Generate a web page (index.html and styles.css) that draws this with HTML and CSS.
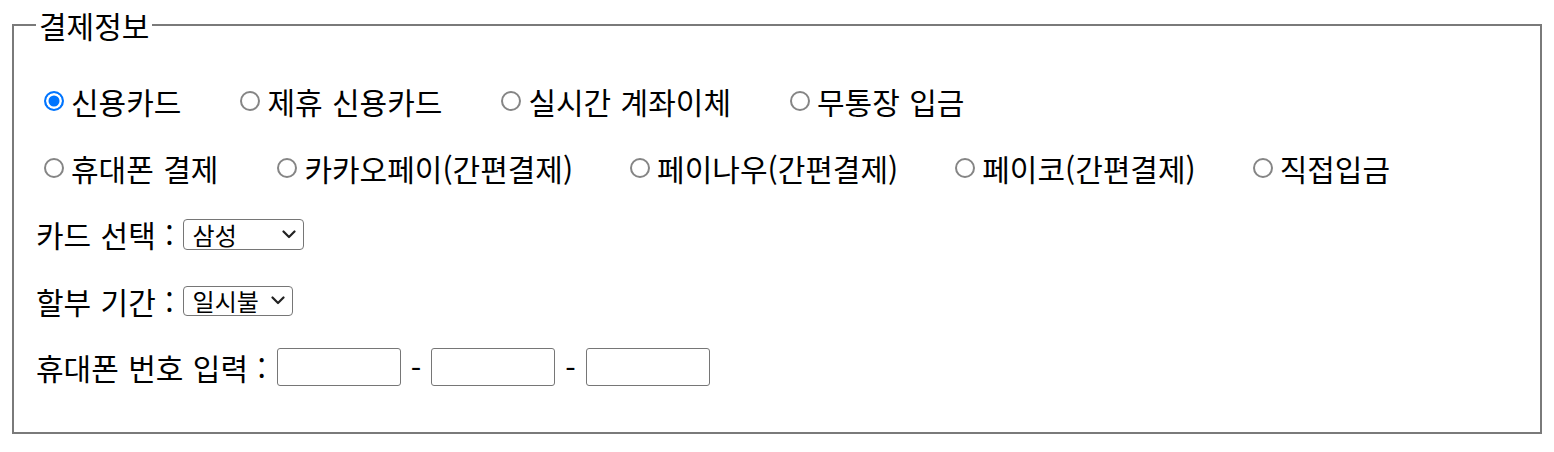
FILE: index.html
```html
<!DOCTYPE html>
<html lang="ko">
<head>
<meta charset="utf-8">
<title>결제정보</title>
<link rel="stylesheet" href="styles.css">
</head>
<body>
<form class="pay-form">
  <fieldset class="pay">
    <legend class="pay-title">결제정보</legend>
    <div class="rows">
      <div class="row">
        <label class="opt"><input type="radio" name="pay" checked><span>신용카드</span></label>
        <label class="opt"><input type="radio" name="pay"><span>제휴 신용카드</span></label>
        <label class="opt"><input type="radio" name="pay"><span>실시간 계좌이체</span></label>
        <label class="opt"><input type="radio" name="pay"><span>무통장 입금</span></label>
      </div>
      <div class="row">
        <label class="opt"><input type="radio" name="pay"><span>휴대폰 결제</span></label>
        <label class="opt opt-paren"><input type="radio" name="pay"><span>카카오페이(간편결제)</span></label>
        <label class="opt opt-paren"><input type="radio" name="pay"><span>페이나우(간편결제)</span></label>
        <label class="opt opt-paren"><input type="radio" name="pay"><span>페이코(간편결제)</span></label>
        <label class="opt"><input type="radio" name="pay"><span>직접입금</span></label>
      </div>
      <div class="row">
        <span class="field-label">카드 선택 :</span>
        <select class="sel sel-card">
          <option>삼성</option>
          <option>신한</option>
          <option>현대</option>
          <option>국민</option>
          <option>롯데</option>
          <option>하나</option>
        </select>
      </div>
      <div class="row">
        <span class="field-label">할부 기간 :</span>
        <select class="sel sel-term">
          <option>일시불</option>
          <option>2개월</option>
          <option>3개월</option>
          <option>6개월</option>
        </select>
      </div>
      <div class="row row-tel">
        <span class="field-label">휴대폰 번호 입력 :</span>
        <input class="tel" type="text">
        <span class="dash">-</span>
        <input class="tel" type="text">
        <span class="dash">-</span>
        <input class="tel" type="text">
      </div>
    </div>
  </fieldset>
</form>
</body>
</html>
```

FILE: styles.css
```css
html, body {
  background: #ffffff;
}

body {
  margin: 0;
  padding: 10px 12px;
  font-family: "Noto Sans CJK KR", "Noto Sans", sans-serif;
  font-size: 30px;
  color: #000000;
}

.pay-form {
  margin: 0;
}

.pay {
  margin: 0;
  padding: 41px 20px 45px 22px;
  border: 2px solid #7a7a7a;
  min-width: 0;
}

.pay-title {
  padding: 0 3px;
  line-height: 30px;
}

.rows {
  display: flex;
  flex-direction: column;
  gap: 26.5px;
}

.row {
  display: flex;
  align-items: center;
  height: 40px;
  word-spacing: 1px;
}

.opt {
  display: flex;
  align-items: center;
  margin-right: 51px;
}

.opt-paren {
  margin-right: 49px;
}

.opt input {
  appearance: none;
  box-sizing: border-box;
  width: 20px;
  height: 20px;
  margin: 0 7px 0 8px;
  border: 2px solid #858585;
  border-radius: 50%;
  background: #ffffff;
  flex: none;
}

.opt input:checked {
  border: 2px solid #0075ff;
  background: #0075ff;
  box-shadow: inset 0 0 0 2.5px #ffffff;
}

.field-label {
  white-space: nowrap;
}

.sel {
  appearance: none;
  box-sizing: border-box;
  margin-left: 9px;
  height: 31px;
  padding: 0 0 0 9px;
  border: 1px solid #767676;
  border-radius: 4px;
  font-family: "Noto Sans CJK KR", sans-serif;
  font-size: 24px;
  line-height: 29px;
  word-spacing: normal;
  color: #000000;
  background: #ffffff url("data:image/svg+xml,%3Csvg xmlns='http://www.w3.org/2000/svg' width='14' height='9' viewBox='0 0 14 9'%3E%3Cpath d='M1.5 1.5 L7 7 L12.5 1.5' fill='none' stroke='%23222' stroke-width='2.2' stroke-linecap='round' stroke-linejoin='round'/%3E%3C/svg%3E") no-repeat right 7px center / 14px 9px;
}

.sel-card {
  width: 121px;
}

.sel-term {
  width: 110px;
  height: 30px;
  line-height: 28px;
}

.tel {
  box-sizing: border-box;
  width: 124px;
  height: 38px;
  border: 1px solid #767676;
  border-radius: 3px;
  padding: 0 4px;
  font-size: 20px;
}

.row-tel .field-label {
  margin-right: 11px;
}

.dash {
  padding: 0 10px;
}
```
